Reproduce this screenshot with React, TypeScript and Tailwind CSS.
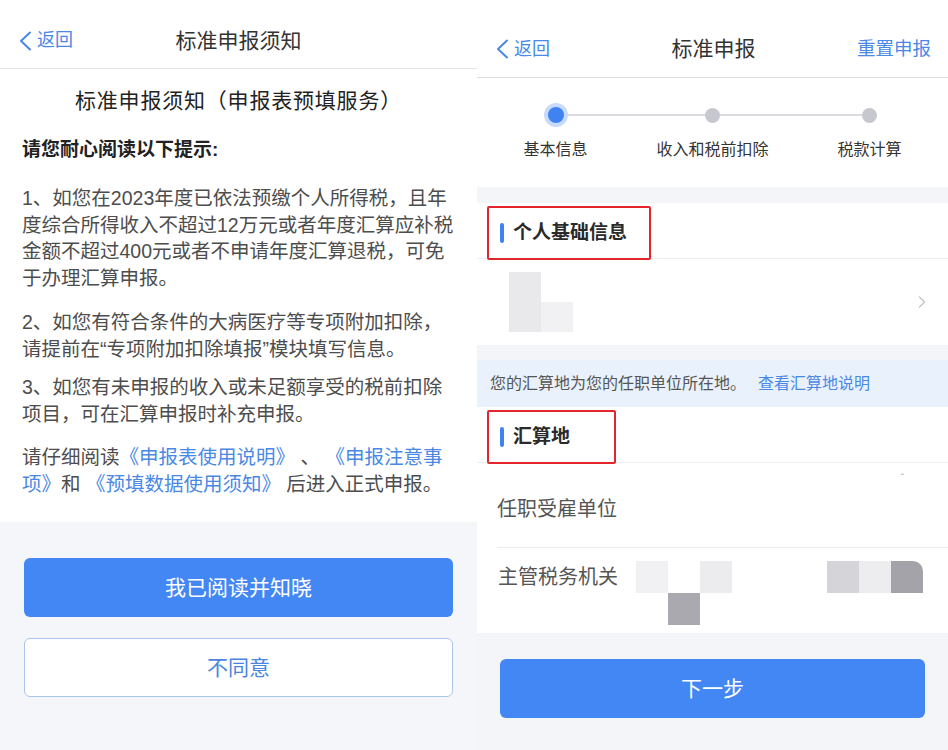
import { ChevronRight } from "lucide-react";

const font = "font-['Liberation_Sans','Noto_Sans_CJK_SC',sans-serif]";

function BackLink() {
  return (
    <div className="flex items-center gap-[5px] text-[18px] text-[#4a88e6]">
      <svg width="13" height="20" viewBox="0 0 13 20" fill="none">
        <polyline
          points="11,1.5 2,10 11,18.5"
          stroke="currentColor"
          strokeWidth="2"
          strokeLinecap="round"
          strokeLinejoin="round"
        />
      </svg>
      <span>返回</span>
    </div>
  );
}

function Link({ children }: { children: React.ReactNode }) {
  return <span className="text-[#4a88e6]">{children}</span>;
}

function NoticePanel() {
  return (
    <div className="flex h-full w-[477px] flex-col bg-[#f5f6fa]">
      <div className="grid h-[69px] grid-cols-[1fr_auto_1fr] items-center border-b border-[#e2e2e4] bg-white px-[19px] pt-[13px]">
        <BackLink />
        <div className="text-[21px] text-[#333]">标准申报须知</div>
        <div />
      </div>

      <div className="h-[453px] bg-white px-[22px] pt-[17px]">
        <div className="text-center text-[21px] leading-[30px] tracking-[0.8px] text-[#222]">
          标准申报须知（申报表预填服务）
        </div>
        <div className="mt-[20px] text-[19px] font-bold leading-[27px] text-[#222]">
          请您耐心阅读以下提示:
        </div>
        <div className="whitespace-nowrap text-[19.5px] leading-[26.5px] text-[#4d4d4d]">
          <p className="mt-[22px]">
            1、如您在2023年度已依法预缴个人所得税，且年
            <br />
            度综合所得收入不超过12万元或者年度汇算应补税
            <br />
            金额不超过400元或者不申请年度汇算退税，可免
            <br />
            于办理汇算申报。
          </p>
          <p className="mt-[18px]">
            2、如您有符合条件的大病医疗等专项附加扣除，
            <br />
            请提前在“专项附加扣除填报”模块填写信息。
          </p>
          <p className="mt-[12px]">
            3、如您有未申报的收入或未足额享受的税前扣除
            <br />
            项目，可在汇算申报时补充申报。
          </p>
          <p className="mt-[17px]">
            请仔细阅读<Link>《申报表使用说明》</Link> 、 <Link>《申报注意事</Link>
            <br />
            <Link>项》</Link>和 <Link>《预填数据使用须知》</Link> 后进入正式申报。
          </p>
        </div>
      </div>

      <div className="flex flex-col gap-[21px] px-[24px] pt-[36px]">
        <button className="h-[59px] rounded-[6px] bg-[#4387f5] text-[21px] text-white">
          我已阅读并知晓
        </button>
        <button className="h-[59px] rounded-[6px] border border-[#a9c5ea] bg-white text-[21px] text-[#4a86e0]">
          不同意
        </button>
      </div>
    </div>
  );
}

const steps = ["基本信息", "收入和税前扣除", "税款计算"];

function Steps() {
  return (
    <div className="grid h-[109px] grid-cols-3 bg-white pt-[25px]">
      {steps.map((label, i) => (
        <div key={label} className="flex flex-col items-center">
          <div className="flex h-[24px] w-full items-center">
            <div className={`h-[2px] flex-1 ${i === 0 ? "" : "bg-[#dcdce0]"}`} />
            {i === 0 ? (
              <div className="flex h-[24px] w-[24px] items-center justify-center rounded-full bg-[#c8dbfb]">
                <div className="h-[16px] w-[16px] rounded-full bg-[#3f83f3]" />
              </div>
            ) : (
              <div className="h-[15px] w-[15px] rounded-full bg-[#c6c7cf]" />
            )}
            <div className={`h-[2px] flex-1 ${i === 2 ? "" : "bg-[#dcdce0]"}`} />
          </div>
          <div className="mt-[12px] text-[16px] leading-[22px] text-[#333]">{label}</div>
        </div>
      ))}
    </div>
  );
}

function SectionTitle({ title, width }: { title: string; width: string }) {
  return (
    <div className="flex h-[56px] items-start border-b border-[#eeeef0] bg-white pl-[10px]">
      <div
        className={`mt-[3px] flex h-[54px] ${width} items-center gap-[9px] rounded-[2px] border-2 border-[#e3262b] pl-[11px]`}
      >
        <div className="h-[20px] w-[4px] rounded-full bg-[#3f83f3]" />
        <span className="text-[19px] font-bold text-[#2a2a2a]">{title}</span>
      </div>
    </div>
  );
}

// blurred-out values, drawn as the mosaic squares of the screenshot
function Mosaic({ cells }: { cells: string[] }) {
  return (
    <div className="grid grid-cols-[repeat(3,32px)] grid-rows-[32px_32px]">
      {cells.map((c, i) => (
        <div key={i} className={c} />
      ))}
    </div>
  );
}

function DeclarePanel() {
  return (
    <div className="flex h-full w-[471px] flex-col bg-[#f4f5f9]">
      <div className="flex h-[78px] items-center justify-between border-b border-[#dedee2] bg-white pl-[19px] pr-[17px] pt-[21px]">
        <div className="w-[100px]">
          <BackLink />
        </div>
        <div className="text-[21px] text-[#333]">标准申报</div>
        <div className="w-[100px] text-right text-[18.5px] text-[#4a88e6]">重置申报</div>
      </div>

      <Steps />

      <div className="mt-[16px]">
        <SectionTitle title="个人基础信息" width="w-[164px]" />
        <div className="flex h-[86px] items-center bg-white pl-[32px] pr-[16px]">
          <div className="flex items-end">
            <div className="h-[60px] w-[32px] bg-[#e9e9eb]" />
            <div className="h-[30px] w-[32px] bg-[#f1f1f3]" />
          </div>
          <div className="flex-1" />
          <ChevronRight className="h-[20px] w-[20px] text-[#c4c4c8]" strokeWidth={1.6} />
        </div>
      </div>

      <div className="mt-[15px] flex h-[47px] items-center bg-[#e9f1fc] pl-[13px] text-[16px] text-[#555]">
        您的汇算地为您的任职单位所在地。
        <span className="ml-[12px] text-[#4a88e6]">查看汇算地说明</span>
      </div>

      <div className="bg-white">
        <SectionTitle title="汇算地" width="w-[129px]" />
        <div className="ml-[20px] flex h-[85px] items-start justify-between border-b border-[#ececee] pr-[44px]">
          <span className="mt-[29px] text-[20px] leading-[34px] text-[#555]">任职受雇单位</span>
          <span className="mt-[10px] text-[10px] leading-[12px] text-[#aaa]">ˆ</span>
        </div>
        <div className="flex h-[85px] items-start pl-[21px] pr-[25px] pt-[13px]">
          <span className="text-[20px] leading-[32px] text-[#555]">主管税务机关</span>
          <div className="ml-[18px]">
            <Mosaic
              cells={[
                "bg-[#f1f1f3]",
                "",
                "bg-[#ececee]",
                "",
                "bg-[#a9a9af]",
                "",
              ]}
            />
          </div>
          <div className="flex-1" />
          <div className="flex">
            <div className="h-[32px] w-[32px] bg-[#d5d5d9]" />
            <div className="h-[32px] w-[32px] bg-[#ededef]" />
            <div className="h-[32px] w-[32px] rounded-tr-[10px] bg-[#a3a3a9]" />
          </div>
        </div>
      </div>

      <div className="px-[23px] pt-[26px]">
        <button className="h-[59px] w-full rounded-[6px] bg-[#4387f5] text-[21px] text-white">
          下一步
        </button>
      </div>
    </div>
  );
}

export default function App() {
  return (
    <div className={`flex h-[750px] w-[948px] overflow-hidden bg-white ${font}`}>
      <NoticePanel />
      <DeclarePanel />
    </div>
  );
}
